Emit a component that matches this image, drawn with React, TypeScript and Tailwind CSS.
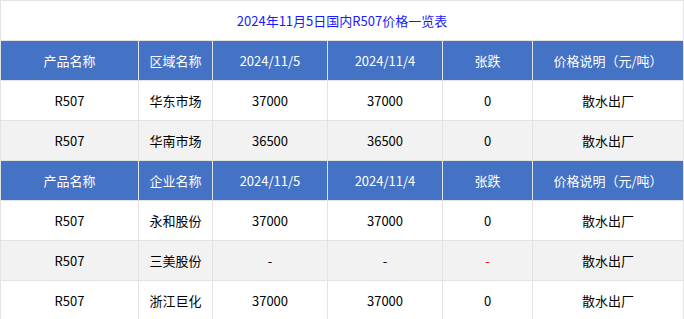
import React from "react";

const font = { fontFamily: '"Noto Sans CJK SC", "Noto Sans", sans-serif' };

type Row = { cells: string[]; header?: boolean; alt?: boolean; redChange?: boolean };

const rows: Row[] = [
  { cells: ["产品名称", "区域名称", "2024/11/5", "2024/11/4", "张跌", "价格说明（元/吨）"], header: true },
  { cells: ["R507", "华东市场", "37000", "37000", "0", "散水出厂"] },
  { cells: ["R507", "华南市场", "36500", "36500", "0", "散水出厂"], alt: true },
  { cells: ["产品名称", "企业名称", "2024/11/5", "2024/11/4", "张跌", "价格说明（元/吨）"], header: true },
  { cells: ["R507", "永和股份", "37000", "37000", "0", "散水出厂"] },
  { cells: ["R507", "三美股份", "-", "-", "-", "散水出厂"], alt: true, redChange: true },
  { cells: ["R507", "浙江巨化", "37000", "37000", "0", "散水出厂"] },
];

export default function App() {
  return (
    <div className="w-[684px] h-[319px] overflow-hidden bg-white" style={font}>
      <div className="grid grid-cols-[137px_73px_114px_114px_89px_150px] auto-rows-[39px] gap-px bg-[#e3e3e3] p-px text-[13px]">
        <div className="col-span-6 bg-white flex items-center justify-center text-[#1a1aff]">
          2024年11月5日国内R507价格一览表
        </div>
        {rows.map((r, ri) =>
          r.cells.map((c, ci) => (
            <div
              key={`${ri}-${ci}`}
              className={
                "flex items-center justify-center " +
                (r.header
                  ? "bg-[#4472c4] text-white"
                  : r.alt
                  ? "bg-[#f2f2f2] text-black"
                  : "bg-white text-black")
              }
            >
              {r.redChange && ci === 4 ? <span className="text-[#e00000]">-</span> : c}
            </div>
          ))
        )}
      </div>
    </div>
  );
}
